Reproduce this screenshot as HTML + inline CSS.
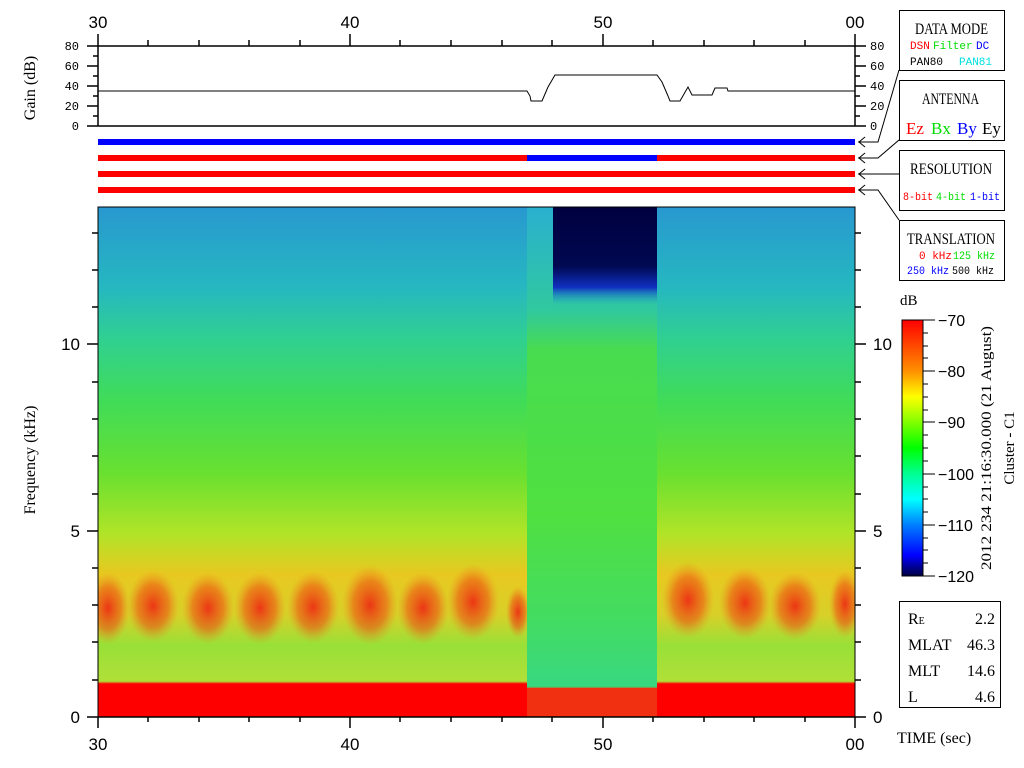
<!DOCTYPE html>
<html><head><meta charset="utf-8"><style>
html,body{margin:0;padding:0;background:#fff;}
svg{display:block;font-family:"Liberation Sans",sans-serif;}
</style></head><body>
<svg width="1024" height="768" viewBox="0 0 1024 768" xmlns="http://www.w3.org/2000/svg">
<defs>
<clipPath id="cp"><rect x="98" y="207" width="757" height="510"/></clipPath>
<linearGradient id="gMain" x1="0" y1="207" x2="0" y2="717" gradientUnits="userSpaceOnUse">
<stop offset="0" stop-color="#2898d0"/>
<stop offset="0.16" stop-color="#26b8c0"/>
<stop offset="0.26" stop-color="#30d090"/>
<stop offset="0.38" stop-color="#40dc58"/>
<stop offset="0.52" stop-color="#68e030"/>
<stop offset="0.64" stop-color="#b0e428"/>
<stop offset="0.72" stop-color="#e8c820"/>
<stop offset="0.80" stop-color="#d8d028"/>
<stop offset="0.86" stop-color="#98e038"/>
<stop offset="0.93" stop-color="#b0e038"/>
<stop offset="0.935" stop-color="#ff0000"/>
<stop offset="1" stop-color="#f81008"/>
</linearGradient>
<linearGradient id="gMid" x1="0" y1="207" x2="0" y2="717" gradientUnits="userSpaceOnUse">
<stop offset="0" stop-color="#2ab0d0"/>
<stop offset="0.2" stop-color="#30c8a0"/>
<stop offset="0.28" stop-color="#48dc50"/>
<stop offset="0.6" stop-color="#50e040"/>
<stop offset="0.8" stop-color="#44dc60"/>
<stop offset="0.94" stop-color="#38d880"/>
<stop offset="0.945" stop-color="#f04010"/>
<stop offset="1" stop-color="#f02010"/>
</linearGradient>
<linearGradient id="gDark" x1="0" y1="207" x2="0" y2="305" gradientUnits="userSpaceOnUse">
<stop offset="0" stop-color="#000040"/>
<stop offset="0.6" stop-color="#000850"/>
<stop offset="0.82" stop-color="#1030c0"/>
<stop offset="1" stop-color="#20a0d0" stop-opacity="0"/>
</linearGradient>
<radialGradient id="blob">
<stop offset="0" stop-color="#f01010" stop-opacity="0.8"/>
<stop offset="0.6" stop-color="#f04010" stop-opacity="0.5"/>
<stop offset="1" stop-color="#f08020" stop-opacity="0"/>
</radialGradient>
<linearGradient id="cbar" x1="0" y1="320" x2="0" y2="576" gradientUnits="userSpaceOnUse">
<stop offset="0" stop-color="#ff0000"/>
<stop offset="0.2" stop-color="#ff9000"/>
<stop offset="0.3" stop-color="#ffff00"/>
<stop offset="0.5" stop-color="#00ff00"/>
<stop offset="0.6" stop-color="#00ff90"/>
<stop offset="0.7" stop-color="#00ffff"/>
<stop offset="0.8" stop-color="#0080ff"/>
<stop offset="0.92" stop-color="#0000ff"/>
<stop offset="1" stop-color="#000040"/>
</linearGradient>
</defs>

<g font-size="17" text-anchor="middle" fill="#000">
<text x="98" y="28">30</text><text x="350" y="28">40</text><text x="603" y="28">50</text><text x="855" y="28">00</text>
<text x="98" y="750">30</text><text x="350" y="750">40</text><text x="603" y="750">50</text><text x="855" y="750">00</text>
</g>
<g stroke="#000" stroke-width="1.5" fill="none">
<line x1="98" y1="46" x2="855" y2="46"/>
<line x1="87" y1="126" x2="866" y2="126"/>
<line x1="98" y1="34" x2="98" y2="126"/>
<line x1="855" y1="34" x2="855" y2="126"/>
<line x1="350" y1="34" x2="350" y2="46"/><line x1="603" y1="34" x2="603" y2="46"/>
<line x1="148" y1="40" x2="148" y2="46"/><line x1="199" y1="40" x2="199" y2="46"/><line x1="249" y1="40" x2="249" y2="46"/><line x1="300" y1="40" x2="300" y2="46"/>
<line x1="400" y1="40" x2="400" y2="46"/><line x1="451" y1="40" x2="451" y2="46"/><line x1="502" y1="40" x2="502" y2="46"/><line x1="552" y1="40" x2="552" y2="46"/>
<line x1="653" y1="40" x2="653" y2="46"/><line x1="704" y1="40" x2="704" y2="46"/><line x1="754" y1="40" x2="754" y2="46"/><line x1="805" y1="40" x2="805" y2="46"/>
<line x1="87" y1="46" x2="98" y2="46"/><line x1="87" y1="66" x2="98" y2="66"/><line x1="87" y1="86" x2="98" y2="86"/><line x1="87" y1="106" x2="98" y2="106"/>
<line x1="93" y1="56" x2="98" y2="56"/><line x1="93" y1="76" x2="98" y2="76"/><line x1="93" y1="96" x2="98" y2="96"/><line x1="93" y1="116" x2="98" y2="116"/>
<line x1="855" y1="46" x2="866" y2="46"/><line x1="855" y1="66" x2="866" y2="66"/><line x1="855" y1="86" x2="866" y2="86"/><line x1="855" y1="106" x2="866" y2="106"/>
<line x1="855" y1="56" x2="860" y2="56"/><line x1="855" y1="76" x2="860" y2="76"/><line x1="855" y1="96" x2="860" y2="96"/><line x1="855" y1="116" x2="860" y2="116"/>
<polyline points="98,91 527,91 530,96 531,101 542,101 545,94 548,87 555,75 657,75 662,82 668,96 670,101 680,101 684,94 688,87 692,95 712,95 715,88 727,88 728,91 855,91" stroke-width="1"/>
</g>
<g font-family="Liberation Mono,monospace" font-size="12" fill="#000">
<text x="79" y="50" text-anchor="end">80</text><text x="79" y="70" text-anchor="end">60</text><text x="79" y="90" text-anchor="end">40</text><text x="79" y="110" text-anchor="end">20</text><text x="79" y="130" text-anchor="end">0</text>
<text x="870" y="50">80</text><text x="870" y="70">60</text><text x="870" y="90">40</text><text x="870" y="110">20</text><text x="870" y="130">0</text>
</g>
<text transform="translate(35,88) rotate(-90)" font-size="16" text-anchor="middle" font-family="Liberation Serif,serif">Gain (dB)</text>

<rect x="98" y="139" width="757" height="6" fill="#0000ff"/>
<rect x="98" y="155" width="429" height="6" fill="#ff0000"/>
<rect x="527" y="155" width="130" height="6" fill="#0000ff"/>
<rect x="657" y="155" width="198" height="6" fill="#ff0000"/>
<rect x="98" y="171" width="757" height="6" fill="#ff0000"/>
<rect x="98" y="187" width="757" height="6" fill="#ff0000"/>

<g clip-path="url(#cp)">
<rect x="98" y="207" width="757" height="510" fill="url(#gMain)"/>
<g fill="url(#blob)">
<ellipse cx="108" cy="608" rx="22" ry="36"/><ellipse cx="153" cy="606" rx="26" ry="36"/><ellipse cx="208" cy="608" rx="26" ry="36"/>
<ellipse cx="260" cy="608" rx="26" ry="36"/><ellipse cx="313" cy="607" rx="26" ry="36"/><ellipse cx="370" cy="605" rx="28" ry="40"/>
<ellipse cx="423" cy="608" rx="26" ry="36"/><ellipse cx="473" cy="602" rx="26" ry="38"/><ellipse cx="518" cy="612" rx="12" ry="26"/>
<ellipse cx="688" cy="600" rx="26" ry="38"/><ellipse cx="745" cy="603" rx="26" ry="36"/><ellipse cx="795" cy="606" rx="26" ry="34"/><ellipse cx="845" cy="604" rx="16" ry="34"/>
</g>
<rect x="527" y="207" width="130" height="481" fill="url(#gMid)"/>
<rect x="527" y="688" width="130" height="29" fill="#f03010"/>
<rect x="553" y="207" width="104" height="98" fill="url(#gDark)"/>
<rect x="98" y="685" width="429" height="32" fill="#ff0000"/>
<rect x="657" y="685" width="198" height="32" fill="#ff0000"/>
</g>
<rect x="98" y="207" width="757" height="510" fill="none" stroke="#000" stroke-width="1"/>
<g stroke="#000" stroke-width="1.5">
<line x1="98" y1="717" x2="855" y2="717"/>
<line x1="98" y1="717" x2="98" y2="728"/><line x1="350" y1="717" x2="350" y2="728"/><line x1="603" y1="717" x2="603" y2="728"/><line x1="855" y1="717" x2="855" y2="728"/>
<line x1="148" y1="717" x2="148" y2="722"/><line x1="199" y1="717" x2="199" y2="722"/><line x1="249" y1="717" x2="249" y2="722"/><line x1="300" y1="717" x2="300" y2="722"/>
<line x1="400" y1="717" x2="400" y2="722"/><line x1="451" y1="717" x2="451" y2="722"/><line x1="502" y1="717" x2="502" y2="722"/><line x1="552" y1="717" x2="552" y2="722"/>
<line x1="653" y1="717" x2="653" y2="722"/><line x1="704" y1="717" x2="704" y2="722"/><line x1="754" y1="717" x2="754" y2="722"/><line x1="805" y1="717" x2="805" y2="722"/>
<line x1="87" y1="717" x2="98" y2="717"/><line x1="87" y1="531" x2="98" y2="531"/><line x1="87" y1="344" x2="98" y2="344"/>
<line x1="855" y1="717" x2="866" y2="717"/><line x1="855" y1="531" x2="866" y2="531"/><line x1="855" y1="344" x2="866" y2="344"/>
<g>
<line x1="92" y1="680" x2="98" y2="680"/><line x1="92" y1="642" x2="98" y2="642"/><line x1="92" y1="605" x2="98" y2="605"/><line x1="92" y1="568" x2="98" y2="568"/>
<line x1="92" y1="494" x2="98" y2="494"/><line x1="92" y1="456" x2="98" y2="456"/><line x1="92" y1="419" x2="98" y2="419"/><line x1="92" y1="382" x2="98" y2="382"/>
<line x1="92" y1="307" x2="98" y2="307"/><line x1="92" y1="270" x2="98" y2="270"/><line x1="92" y1="233" x2="98" y2="233"/>
</g>
<g transform="translate(763,0)">
<line x1="92" y1="680" x2="98" y2="680"/><line x1="92" y1="642" x2="98" y2="642"/><line x1="92" y1="605" x2="98" y2="605"/><line x1="92" y1="568" x2="98" y2="568"/>
<line x1="92" y1="494" x2="98" y2="494"/><line x1="92" y1="456" x2="98" y2="456"/><line x1="92" y1="419" x2="98" y2="419"/><line x1="92" y1="382" x2="98" y2="382"/>
<line x1="92" y1="307" x2="98" y2="307"/><line x1="92" y1="270" x2="98" y2="270"/><line x1="92" y1="233" x2="98" y2="233"/>
</g>
</g>
<g font-size="17">
<text x="80" y="723" text-anchor="end">0</text><text x="80" y="537" text-anchor="end">5</text><text x="80" y="350" text-anchor="end">10</text>
<text x="873" y="723">0</text><text x="873" y="537">5</text><text x="873" y="350">10</text>
</g>
<text transform="translate(35,460) rotate(-90)" font-size="16" text-anchor="middle" font-family="Liberation Serif,serif">Frequency (kHz)</text>

<g stroke="#000" stroke-width="1" fill="none">
<polyline points="899,70 878,142 858,142"/>
<polyline points="899,140 878,158 858,158"/>
<polyline points="899,174 858,174"/>
<polyline points="899,220 878,190 858,190"/>
<polyline points="865,137 859,142 865,147"/><polyline points="865,153 859,158 865,163"/><polyline points="865,169 859,174 865,179"/><polyline points="865,185 859,190 865,195"/>
<rect x="899.5" y="10.5" width="105" height="60"/>
<rect x="899.5" y="80.5" width="105" height="60"/>
<rect x="899.5" y="150.5" width="105" height="60"/>
<rect x="899.5" y="220.5" width="105" height="60"/>
</g>
<g font-size="16" font-family="Liberation Serif,serif">
<text x="915" y="34" textLength="73" lengthAdjust="spacingAndGlyphs">DATA MODE</text>
<text x="922" y="104" textLength="57" lengthAdjust="spacingAndGlyphs">ANTENNA</text>
<text x="910" y="174" textLength="82" lengthAdjust="spacingAndGlyphs">RESOLUTION</text>
<text x="907" y="244" textLength="88" lengthAdjust="spacingAndGlyphs">TRANSLATION</text>
</g>
<g font-family="Liberation Mono,monospace" font-size="11">
<text x="910" y="49" fill="#ff0000">DSN</text><text x="933" y="49" fill="#00dd00">Filter</text><text x="976" y="49" fill="#0000ff">DC</text>
<text x="910" y="65" fill="#000">PAN80</text><text x="959" y="65" fill="#00e0e0">PAN81</text>
<text x="903" y="200" fill="#ff0000" textLength="30" lengthAdjust="spacingAndGlyphs">8-bit</text><text x="936" y="200" fill="#00dd00" textLength="30" lengthAdjust="spacingAndGlyphs">4-bit</text><text x="970" y="200" fill="#0000ff" textLength="30" lengthAdjust="spacingAndGlyphs">1-bit</text>
<text x="919" y="259" fill="#ff0000">0 kHz</text><text x="953" y="259" fill="#00dd00" textLength="42" lengthAdjust="spacingAndGlyphs">125 kHz</text>
<text x="907" y="274" fill="#0000ff" textLength="42" lengthAdjust="spacingAndGlyphs">250 kHz</text><text x="952" y="274" fill="#000" textLength="42" lengthAdjust="spacingAndGlyphs">500 kHz</text>
</g>
<g font-family="Liberation Serif,serif" font-size="17">
<text x="906" y="134" fill="#ff0000">Ez</text><text x="931" y="134" fill="#00dd00">Bx</text><text x="957" y="134" fill="#0000ff">By</text><text x="982" y="134" fill="#000">Ey</text>
</g>

<text x="900" y="305" font-size="15" font-family="Liberation Serif,serif">dB</text>
<rect x="902" y="320" width="21" height="256" fill="url(#cbar)" stroke="#000" stroke-width="1"/>
<g stroke="#000" stroke-width="1">
<line x1="923" y1="320" x2="935" y2="320"/><line x1="923" y1="371" x2="935" y2="371"/><line x1="923" y1="422" x2="935" y2="422"/><line x1="923" y1="474" x2="935" y2="474"/><line x1="923" y1="525" x2="935" y2="525"/><line x1="923" y1="576" x2="935" y2="576"/>
<line x1="923" y1="333" x2="928" y2="333"/><line x1="923" y1="346" x2="928" y2="346"/><line x1="923" y1="358" x2="928" y2="358"/>
<line x1="923" y1="384" x2="928" y2="384"/><line x1="923" y1="397" x2="928" y2="397"/><line x1="923" y1="410" x2="928" y2="410"/>
<line x1="923" y1="435" x2="928" y2="435"/><line x1="923" y1="448" x2="928" y2="448"/><line x1="923" y1="461" x2="928" y2="461"/>
<line x1="923" y1="487" x2="928" y2="487"/><line x1="923" y1="499" x2="928" y2="499"/><line x1="923" y1="512" x2="928" y2="512"/>
<line x1="923" y1="538" x2="928" y2="538"/><line x1="923" y1="550" x2="928" y2="550"/><line x1="923" y1="563" x2="928" y2="563"/>
</g>
<g font-size="16">
<text x="938" y="326">−70</text><text x="938" y="377">−80</text><text x="938" y="428">−90</text><text x="938" y="480">−100</text><text x="938" y="531">−110</text><text x="938" y="582">−120</text>
</g>
<text transform="translate(991,448) rotate(-90)" font-size="15" text-anchor="middle" font-family="Liberation Serif,serif" textLength="244" lengthAdjust="spacingAndGlyphs">2012 234 21:16:30.000 (21 August)</text>
<text transform="translate(1014,448) rotate(-90)" font-size="15" text-anchor="middle" font-family="Liberation Serif,serif">Cluster - C1</text>

<rect x="899.5" y="601.5" width="101" height="106" fill="none" stroke="#000" stroke-width="1"/>
<g font-size="16" font-family="Liberation Serif,serif">
<text x="908" y="624">R<tspan font-size="10">E</tspan></text><text x="995" y="624" text-anchor="end">2.2</text>
<text x="908" y="650">MLAT</text><text x="995" y="650" text-anchor="end">46.3</text>
<text x="908" y="676">MLT</text><text x="995" y="676" text-anchor="end">14.6</text>
<text x="908" y="702">L</text><text x="995" y="702" text-anchor="end">4.6</text>
</g>
<text x="897" y="743" font-size="16" font-family="Liberation Serif,serif">TIME (sec)</text>
</svg>
</body></html>
